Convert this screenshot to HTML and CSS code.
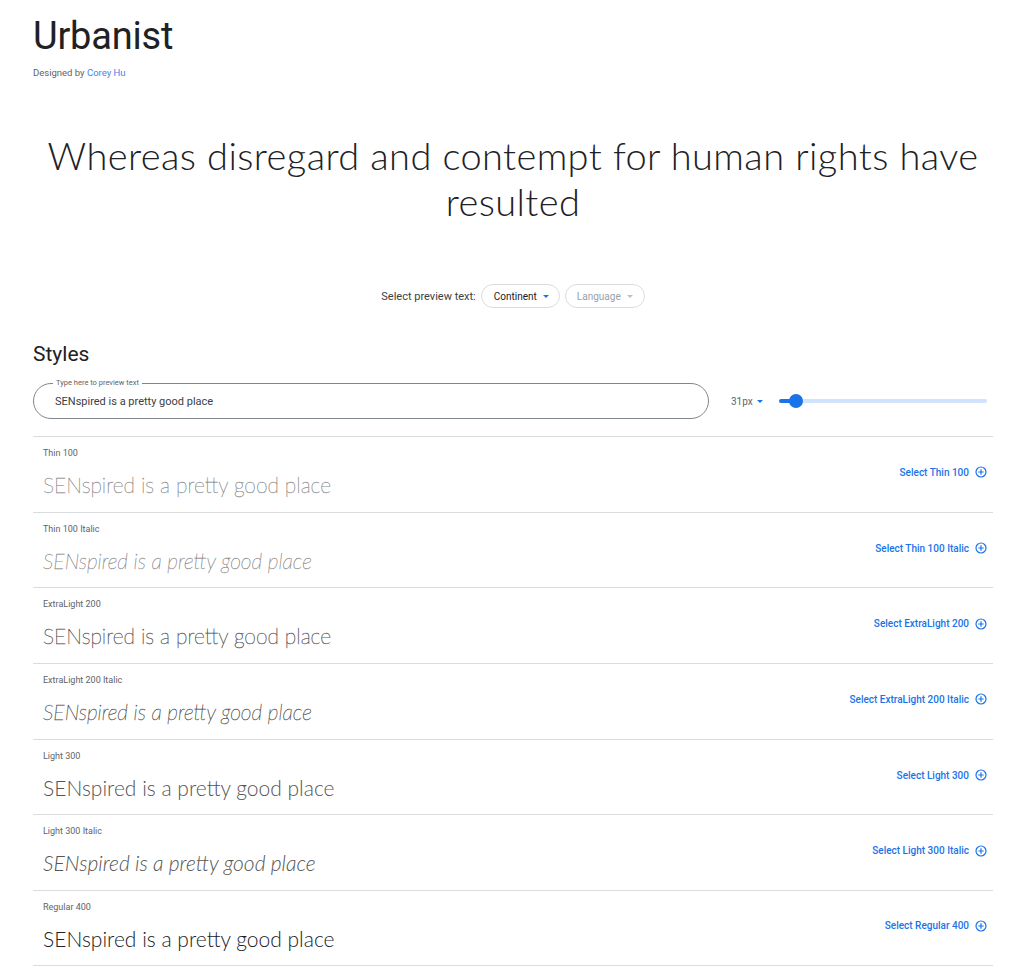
FILE: index.html
```html
<!DOCTYPE html>
<html>
<head>
<meta charset="utf-8">
<link rel="stylesheet" href="styles.css">
</head>
<body>
<div class="page">
  <header class="header">
    <h1 class="family">Urbanist</h1>
    <div class="designer">Designed by <a class="link" href="#">Corey Hu</a></div>
  </header>

  <section class="hero">
    <p class="hero-text">Whereas disregard and contempt for human rights have resulted</p>
  </section>

  <div class="picker">
    <span class="picker-label">Select preview text:</span>
    <button class="chip">Continent <span class="caret"></span></button>
    <button class="chip chip-disabled">Language <span class="caret"></span></button>
  </div>

  <h2 class="section-title">Styles</h2>

  <div class="controls">
    <div class="field">
      <span class="field-label">Type here to preview text</span>
      <span class="field-value">SENspired is a pretty good place</span>
    </div>
    <div class="size">31px <span class="caret caret-dark"></span></div>
    <div class="slider">
      <div class="track-active"></div>
      <div class="thumb"></div>
      <div class="track"></div>
    </div>
  </div>

  <div class="styles">
    <div class="row">
      <div class="row-main">
        <div class="row-label">Thin 100</div>
        <div class="preview w100">SENspired is a pretty good place</div>
      </div>
      <button class="select">Select Thin 100 <svg class="plus" viewBox="0 0 12 12"><circle cx="6" cy="6" r="5" /><path d="M6 3.3v5.4M3.3 6h5.4"/></svg></button>
    </div>
    <div class="row">
      <div class="row-main">
        <div class="row-label">Thin 100 Italic</div>
        <div class="preview w100 it">SENspired is a pretty good place</div>
      </div>
      <button class="select">Select Thin 100 Italic <svg class="plus" viewBox="0 0 12 12"><circle cx="6" cy="6" r="5" /><path d="M6 3.3v5.4M3.3 6h5.4"/></svg></button>
    </div>
    <div class="row">
      <div class="row-main">
        <div class="row-label">ExtraLight 200</div>
        <div class="preview w200">SENspired is a pretty good place</div>
      </div>
      <button class="select">Select ExtraLight 200 <svg class="plus" viewBox="0 0 12 12"><circle cx="6" cy="6" r="5" /><path d="M6 3.3v5.4M3.3 6h5.4"/></svg></button>
    </div>
    <div class="row">
      <div class="row-main">
        <div class="row-label">ExtraLight 200 Italic</div>
        <div class="preview w200 it">SENspired is a pretty good place</div>
      </div>
      <button class="select">Select ExtraLight 200 Italic <svg class="plus" viewBox="0 0 12 12"><circle cx="6" cy="6" r="5" /><path d="M6 3.3v5.4M3.3 6h5.4"/></svg></button>
    </div>
    <div class="row">
      <div class="row-main">
        <div class="row-label">Light 300</div>
        <div class="preview w300">SENspired is a pretty good place</div>
      </div>
      <button class="select">Select Light 300 <svg class="plus" viewBox="0 0 12 12"><circle cx="6" cy="6" r="5" /><path d="M6 3.3v5.4M3.3 6h5.4"/></svg></button>
    </div>
    <div class="row">
      <div class="row-main">
        <div class="row-label">Light 300 Italic</div>
        <div class="preview w300 it">SENspired is a pretty good place</div>
      </div>
      <button class="select">Select Light 300 Italic <svg class="plus" viewBox="0 0 12 12"><circle cx="6" cy="6" r="5" /><path d="M6 3.3v5.4M3.3 6h5.4"/></svg></button>
    </div>
    <div class="row">
      <div class="row-main">
        <div class="row-label">Regular 400</div>
        <div class="preview w400">SENspired is a pretty good place</div>
      </div>
      <button class="select">Select Regular 400 <svg class="plus" viewBox="0 0 12 12"><circle cx="6" cy="6" r="5" /><path d="M6 3.3v5.4M3.3 6h5.4"/></svg></button>
    </div>
  </div>
</div>
</body>
</html>
```

FILE: styles.css
```css
* { box-sizing: border-box; }
html, body { margin: 0; background: #fff; }
body { font-family: Roboto, "Liberation Sans", sans-serif; color: #202124; }

.page { width: 960px; margin-left: 33px; }

.header { padding-top: 13px; }
.family { margin: 0; font-family: Roboto, sans-serif; font-weight: 400; font-size: 38px; line-height: 46px; color: #202124; letter-spacing: -0.2px; }
.designer { margin-top: 8px; font-size: 9.5px; line-height: 12px; color: #5f6368; }
.link { color: #4a7fef; text-decoration: none; }

.hero { padding: 0 10px; margin-top: 53px; text-align: center; }
.hero-text { margin: 0; font-family: Lato, sans-serif; font-weight: 300; font-size: 38px; line-height: 46px; letter-spacing: 0.4px; color: #202124; }

.picker { display: flex; justify-content: center; align-items: center; gap: 5px; margin-top: 60px; height: 24px; }
.picker-label { font-size: 11px; color: #3c4043; }
.chip { display: inline-flex; align-items: center; gap: 6px; height: 24px; padding: 0 10px 0 12px; border: 1px solid #dadce0; border-radius: 12px; background: #fff; font-family: Roboto, sans-serif; font-size: 10px; color: #202124; }
.chip-disabled { color: #9aa0a6; padding: 0 11px 0 11px; }
.caret { display: inline-block; width: 0; height: 0; border-left: 3.5px solid transparent; border-right: 3.5px solid transparent; border-top: 3.5px solid #1a73e8; }
.chip-disabled .caret { border-top-color: #bdc1c6; }
.caret-dark { border-top-color: #1a73e8; margin-left: 4px; }

.section-title { margin: 32px 0 0; font-weight: 400; font-size: 21px; line-height: 28px; color: #202124; }

.controls { display: flex; align-items: center; margin-top: 14px; height: 38px; }
.field { position: relative; width: 676px; height: 36px; border: 1px solid #80868b; border-radius: 18px; display: flex; align-items: center; padding-left: 21px; }
.field-label { position: absolute; top: -6px; left: 19px; padding: 0 3px; background: #fff; font-size: 7.5px; line-height: 10px; color: #5f6368; }
.field-value { font-size: 11px; color: #3c4043; }
.size { margin-left: 22px; font-size: 10px; color: #5f6368; display: flex; align-items: center; width: 48px; }
.slider { display: flex; align-items: center; flex: 1; margin-right: 6px; height: 20px; }
.track-active { width: 12px; height: 4px; background: #1a73e8; border-radius: 2px 0 0 2px; }
.thumb { width: 14px; height: 14px; border-radius: 50%; background: #1a73e8; margin: 0 -2px; position: relative; z-index: 1; }
.track { flex: 1; height: 4px; background: #d2e3fc; border-radius: 0 2px 2px 0; }

.styles { margin-top: 16px; }
.row { display: flex; align-items: center; justify-content: space-between; border-top: 1px solid #dadce0; height: 75.7px; }
.row:last-child { border-bottom: 1px solid #dadce0; }
.row-main { padding: 9px 10px 0; align-self: stretch; }
.row-label { font-size: 9px; line-height: 14px; color: #5f6368; }
.preview { font-family: Lato, sans-serif; font-size: 21px; line-height: 36px; margin-top: 7px; color: #202124; }
.w100 { font-weight: 100; color: #8a8a8a; -webkit-text-stroke: 0.35px #8a8a8a; }
.w200 { font-weight: 100; color: #5a5a5a; -webkit-text-stroke: 0.45px #5a5a5a; }
.w300 { font-weight: 300; color: #555; }
.w400 { font-weight: 300; color: #202124; }
.it { font-style: italic; }

.select { display: flex; align-items: center; gap: 6px; margin-right: 6px; margin-top: -4px; padding: 0; border: 0; background: none; font-family: Roboto, sans-serif; font-size: 10px; font-weight: 500; color: #1a73e8; }
.plus { width: 12px; height: 12px; fill: none; stroke: #1a73e8; stroke-width: 1.2; }
```
